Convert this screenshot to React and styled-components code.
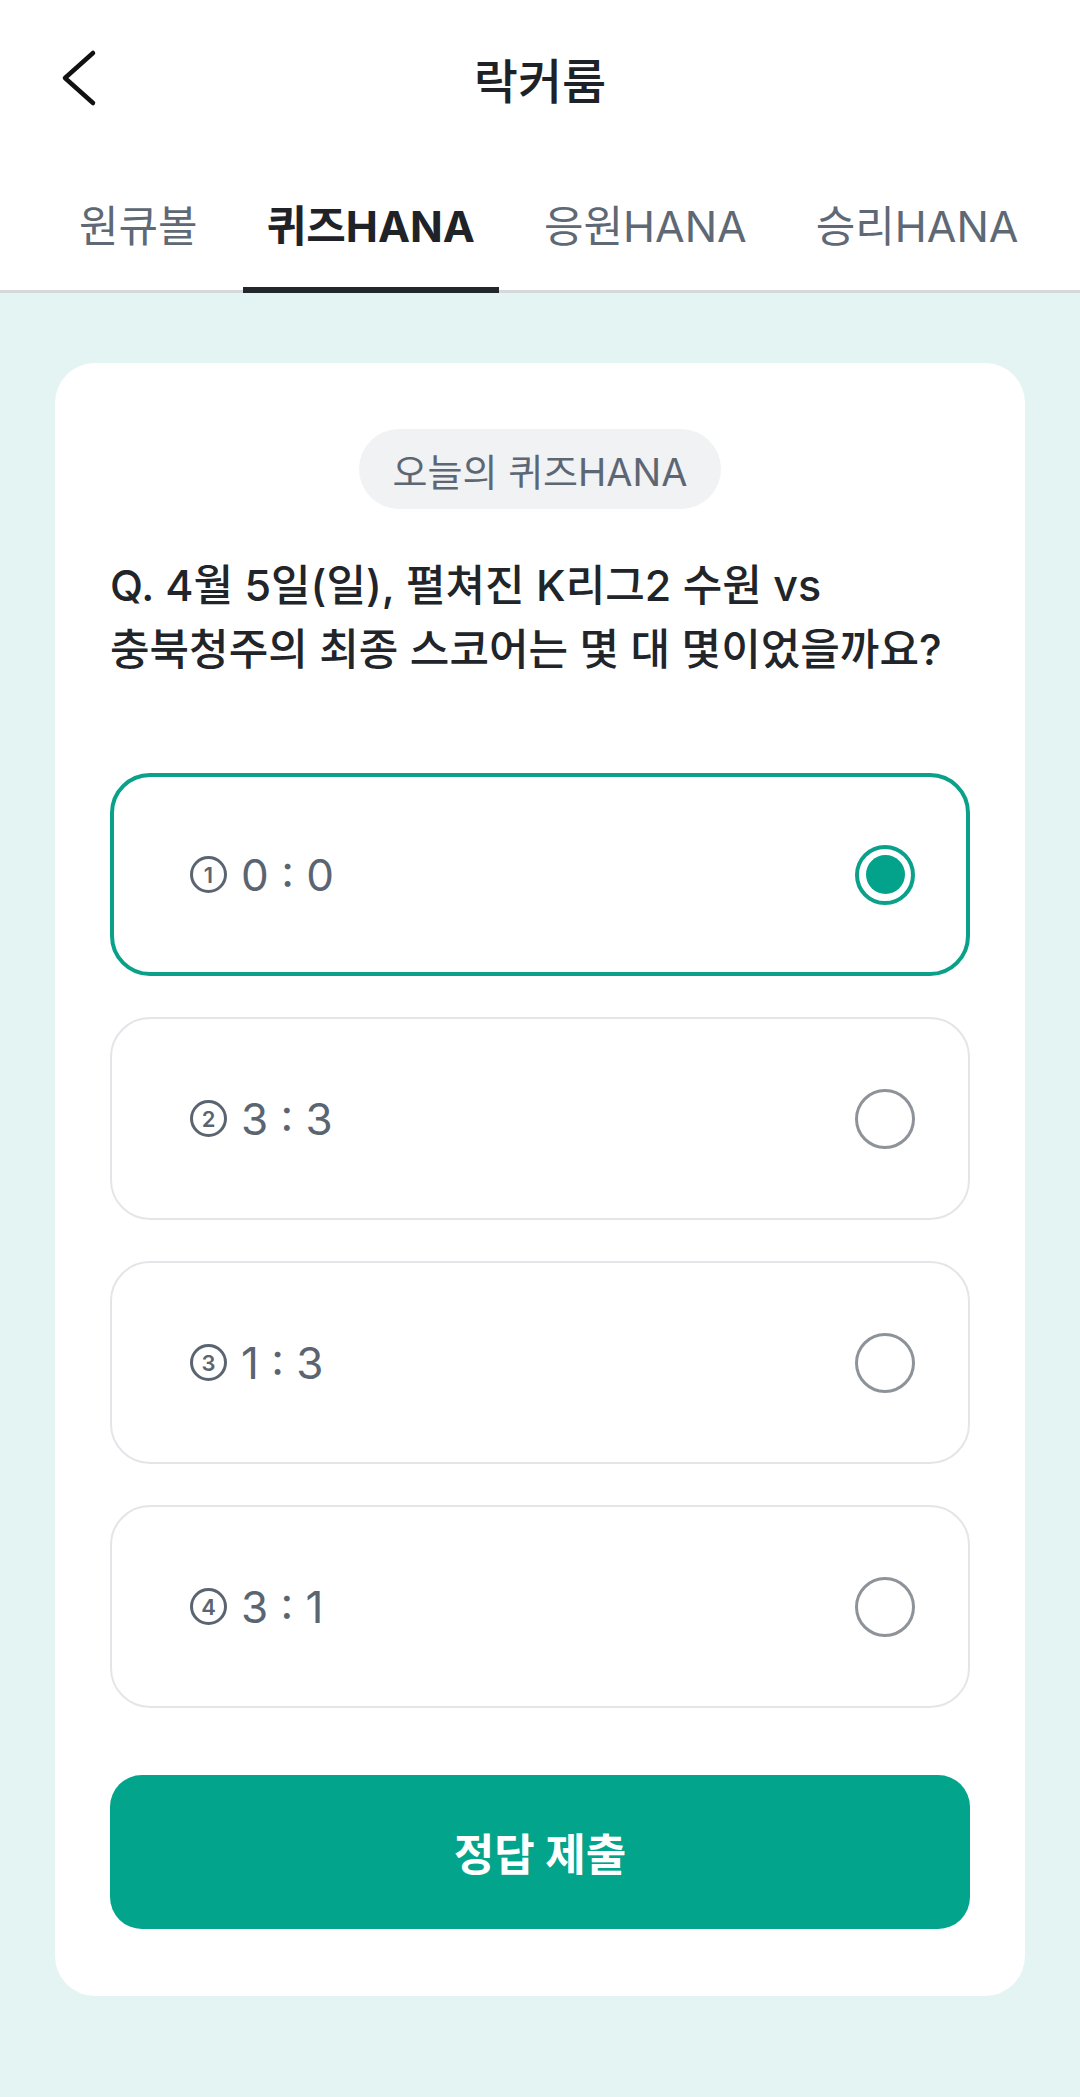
import React, { useState } from "react";
import styled, { createGlobalStyle } from "styled-components";

const GlobalStyle = createGlobalStyle`
  * { box-sizing: border-box; }
  html, body { margin: 0; padding: 0; }
  body {
    font-family: Inter, "Noto Sans CJK KR", "Noto Sans", sans-serif;
    background: #e4f4f2;
    -webkit-font-smoothing: antialiased;
  }
`;

const Page = styled.div`
  min-height: 100vh;
  display: flex;
  flex-direction: column;
  background: #e4f4f2;
`;

const Header = styled.header`
  background: #ffffff;
  display: flex;
  flex-direction: column;
`;

const TopBar = styled.div`
  height: 156px;
  display: grid;
  grid-template-columns: 1fr auto 1fr;
  align-items: center;
  padding: 0 59px;
`;

const BackButton = styled.button`
  justify-self: start;
  width: 40px;
  height: 60px;
  padding: 0;
  border: none;
  background: none;
  display: flex;
  cursor: pointer;
`;

const Title = styled.h1`
  margin: 0;
  font-size: 48px;
  font-weight: 500;
  color: #1e2226;
`;

const TabBar = styled.nav`
  display: flex;
  gap: 21px;
  padding: 0 55px;
  border-bottom: 3px solid #d5d9dc;
`;

const Tab = styled.button`
  position: relative;
  border: none;
  background: none;
  padding: 47px 24px 41px;
  font-family: inherit;
  font-size: 43px;
  line-height: 46px;
  font-weight: ${(p) => (p.$active ? 700 : 400)};
  color: ${(p) => (p.$active ? "#1f2328" : "#5e6975")};
  cursor: pointer;
  white-space: nowrap;

  &::after {
    content: "";
    position: absolute;
    left: 0;
    right: 0;
    bottom: -3px;
    height: 6px;
    background: ${(p) => (p.$active ? "#22272c" : "transparent")};
  }
`;

const Main = styled.main`
  padding: 70px 55px 101px;
`;

const Card = styled.section`
  background: #ffffff;
  border-radius: 40px;
  padding: 66px 55px 67px;
  display: flex;
  flex-direction: column;
`;

const Badge = styled.div`
  align-self: center;
  height: 80px;
  padding: 0 34px;
  border-radius: 40px;
  background: #f0f2f4;
  color: #5d6773;
  font-size: 38px;
  display: flex;
  align-items: center;
`;

const Question = styled.p`
  margin: 44px 0 0;
  font-size: 43px;
  line-height: 64px;
  font-weight: 500;
  color: #212529;
`;

const OptionList = styled.div`
  margin-top: 92px;
  display: flex;
  flex-direction: column;
  gap: 41px;
`;

const Option = styled.label`
  height: 203px;
  border-radius: 40px;
  border: ${(p) => (p.$selected ? "4px solid #0aa08a" : "2px solid #e3e5e8")};
  padding: 0 ${(p) => (p.$selected ? 51 : 53)}px 0 ${(p) => (p.$selected ? 76 : 78)}px;
  display: flex;
  align-items: center;
  justify-content: space-between;
  background: #ffffff;
  cursor: pointer;
`;

const OptionText = styled.span`
  display: flex;
  align-items: center;
  gap: 14px;
  font-size: 44px;
  color: #5b6571;
`;

const Num = styled.span`
  flex: none;
  width: 37px;
  height: 37px;
  border-radius: 50%;
  border: 3px solid #5b6571;
  display: inline-flex;
  align-items: center;
  justify-content: center;
  font-size: 22px;
  font-weight: 600;
  line-height: 1;
  color: #5b6571;
`;

const Radio = styled.span`
  width: 60px;
  height: 60px;
  border-radius: 50%;
  border: ${(p) => (p.$selected ? "4px solid #0aa08a" : "3px solid #8d9399")};
  display: flex;
  align-items: center;
  justify-content: center;

  &::before {
    content: "";
    width: 39px;
    height: 39px;
    border-radius: 50%;
    background: ${(p) => (p.$selected ? "#03a38b" : "transparent")};
  }
`;

const HiddenInput = styled.input`
  display: none;
`;

const SubmitButton = styled.button`
  margin-top: 67px;
  height: 154px;
  border: none;
  border-radius: 32px;
  background: #02a48c;
  color: #ffffff;
  font-family: inherit;
  font-size: 44px;
  font-weight: 700;
  cursor: pointer;
`;

const tabs = ["원큐볼", "퀴즈HANA", "응원HANA", "승리HANA"];
const options = [
  { n: "1", label: "0 : 0" },
  { n: "2", label: "3 : 3" },
  { n: "3", label: "1 : 3" },
  { n: "4", label: "3 : 1" },
];

export default function App() {
  const [active, setActive] = useState(1);
  const [selected, setSelected] = useState(0);

  return (
    <Page>
      <GlobalStyle />
      <Header>
        <TopBar>
          <BackButton aria-label="뒤로">
            <svg width="40" height="60" viewBox="0 0 40 60" fill="none">
              <polyline
                points="34,5 6,30 34,55"
                stroke="#111"
                strokeWidth="4.5"
                strokeLinecap="round"
                strokeLinejoin="round"
              />
            </svg>
          </BackButton>
          <Title>락커룸</Title>
          <span />
        </TopBar>
        <TabBar>
          {tabs.map((t, i) => (
            <Tab key={t} $active={i === active} onClick={() => setActive(i)}>
              {t}
            </Tab>
          ))}
        </TabBar>
      </Header>
      <Main>
        <Card>
          <Badge>오늘의 퀴즈HANA</Badge>
          <Question>
            Q. 4월 5일(일), 펼쳐진 K리그2 수원 vs
            <br />
            충북청주의 최종 스코어는 몇 대 몇이었을까요?
          </Question>
          <OptionList>
            {options.map((o, i) => (
              <Option key={o.n} $selected={i === selected}>
                <HiddenInput
                  type="radio"
                  name="quiz"
                  checked={i === selected}
                  onChange={() => setSelected(i)}
                />
                <OptionText>
                  <Num>{o.n}</Num>
                  {o.label}
                </OptionText>
                <Radio $selected={i === selected} />
              </Option>
            ))}
          </OptionList>
          <SubmitButton>정답 제출</SubmitButton>
        </Card>
      </Main>
    </Page>
  );
}
